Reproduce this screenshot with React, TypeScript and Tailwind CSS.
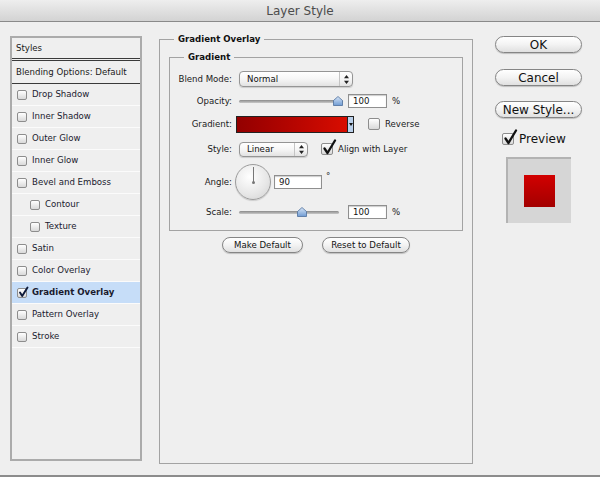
import React from 'react';

const styleItems: { label: string; indent?: boolean; checked?: boolean; selected?: boolean }[] = [
    { label: 'Drop Shadow' },
    { label: 'Inner Shadow' },
    { label: 'Outer Glow' },
    { label: 'Inner Glow' },
    { label: 'Bevel and Emboss' },
    { label: 'Contour', indent: true },
    { label: 'Texture', indent: true },
    { label: 'Satin' },
    { label: 'Color Overlay' },
    { label: 'Gradient Overlay', checked: true, selected: true },
    { label: 'Pattern Overlay' },
    { label: 'Stroke' },
];

function Checkbox({ checked, big }: { checked?: boolean; big?: boolean }) {
    return (
        <span
            className={`relative inline-block shrink-0 rounded-[2px] border border-[#8d8d8d] bg-gradient-to-b from-white to-[#d9d9d9] ${big ? 'w-[12px] h-[12px]' : 'w-[10px] h-[10px]'}`}
        >
            {checked && big && (
                <svg className="absolute left-[0px] top-[-5px]" width="15" height="16" viewBox="0 0 15 16">
                    <path d="M2.5 9.5 L5.5 14 L13 1.5" stroke="#111" strokeWidth="2.3" fill="none" strokeLinecap="round" strokeLinejoin="round" />
                </svg>
            )}
            {checked && !big && (
                <svg className="absolute left-[0px] top-[-3px]" width="11" height="12" viewBox="0 0 11 12">
                    <path d="M2 6.5 L4.2 10 L9.5 1.5" stroke="#0d1a3a" strokeWidth="1.9" fill="none" strokeLinecap="round" strokeLinejoin="round" />
                </svg>
            )}
        </span>
    );
}

function SelectBox({ value, className }: { value: string; className: string }) {
    return (
        <div className={`flex items-center rounded-[4px] border border-[#959595] bg-gradient-to-b from-white via-[#f6f6f6] to-[#e2e2e2] shadow-[0_1px_1px_rgba(0,0,0,0.15)] ${className}`}>
            <span className="flex-1 pl-[7px] text-[8.6px] text-[#111]">{value}</span>
            <span className="h-full w-[13px] border-l border-[#c4c4c4] flex items-center justify-center">
                <svg width="5" height="9" viewBox="0 0 5 9">
                    <path d="M2.5 0 L5 3.2 L0 3.2 Z M2.5 9 L5 5.8 L0 5.8 Z" fill="#222" />
                </svg>
            </span>
        </div>
    );
}

function Slider({ width, thumb }: { width: string; thumb: number }) {
    return (
        <div className={`relative h-[10px] flex items-center ${width}`}>
            <div className="w-full h-[3px] rounded-full bg-gradient-to-b from-[#8a8a8a] to-[#c9c9c9]" />
            <svg className="absolute top-[0px]" style={{ left: thumb }} width="10" height="10" viewBox="0 0 10 10">
                <defs>
                    <linearGradient id="thumbg" x1="0" y1="0" x2="0" y2="1">
                        <stop offset="0" stopColor="#d8e6f7" />
                        <stop offset="1" stopColor="#6f9bd3" />
                    </linearGradient>
                </defs>
                <path d="M5 0.5 L9.5 4.5 L9.5 9.5 L0.5 9.5 L0.5 4.5 Z" fill="url(#thumbg)" stroke="#4d6f9c" strokeWidth="0.8" />
            </svg>
        </div>
    );
}

function TextField({ value, className }: { value: string; className: string }) {
    return (
        <div className={`flex items-center bg-white border border-[#8f8f8f] shadow-[inset_0_1px_1px_rgba(0,0,0,0.2)] pl-[4px] text-[8.6px] text-[#111] ${className}`}>
            {value}
        </div>
    );
}

function AquaButton({ label, className, big }: { label: string; className: string; big?: boolean }) {
    return (
        <div
            className={`flex items-center justify-center rounded-full border border-[#858585] bg-gradient-to-b from-white via-[#f3f3f3] to-[#e0e0e0] shadow-[0_1px_1px_rgba(0,0,0,0.2)] text-[#111] ${big ? 'text-[12px]' : 'text-[8.6px]'} ${className}`}
        >
            {label}
        </div>
    );
}

function Label({ text }: { text: string }) {
    return <span className="w-[62px] shrink-0 text-right text-[8.6px] text-[#1a1a1a]">{text}</span>;
}

export default function App() {
    return (
        <div className="w-[600px] h-[477px] bg-[#efefef] flex flex-col overflow-hidden font-['DejaVu_Sans',sans-serif] border-b-2 border-[#8c8c8c]">
            <div className="h-[22px] shrink-0 bg-gradient-to-b from-[#eeeeee] to-[#d3d3d3] border-b border-[#8a8a8a] flex items-center justify-center text-[12px] text-[#4c4c4c]">
                Layer Style
            </div>

            <div className="flex flex-1">
                {/* styles list */}
                <div className="ml-[10px] mt-[14px] w-[132px] h-[425px] border-2 border-[#ababab] flex flex-col">
                    <div className="h-[23px] flex items-center pl-[4px] text-[8.6px] text-[#1a1a1a] border-b-[3px] border-double border-[#3a3a3a]">
                        Styles
                    </div>
                    <div className="h-[23px] flex items-center pl-[4px] text-[8.6px] text-[#1a1a1a] border-b border-[#3a3a3a]">
                        Blending Options: Default
                    </div>
                    {styleItems.map((item) => (
                        <div
                            key={item.label}
                            className={`h-[22px] flex items-center gap-[5px] border-b border-[#fbfbfb] ${item.indent ? 'pl-[18px]' : 'pl-[5px]'} ${item.selected ? 'bg-[#c6ddf8] font-bold' : ''}`}
                        >
                            <Checkbox checked={item.checked} />
                            <span className="text-[8.6px] text-[#1a1a2e]">{item.label}</span>
                        </div>
                    ))}
                </div>

                {/* settings */}
                <fieldset className="ml-[17px] mt-[11px] w-[314px] h-[431px] border border-[#a3a3a3]">
                    <legend className="ml-[14px] px-[4px] text-[8.6px] leading-[12px] font-bold text-[#111]">Gradient Overlay</legend>
                    <fieldset className="mx-[9px] mt-[6px] border border-[#a3a3a3] pt-[5px] pb-[8px]">
                        <legend className="ml-[14px] px-[4px] text-[8.6px] leading-[12px] font-bold text-[#111]">Gradient</legend>

                        <div className="h-[22px] flex items-center">
                            <Label text="Blend Mode:" />
                            <SelectBox value="Normal" className="ml-[7px] w-[114px] h-[16px]" />
                        </div>

                        <div className="h-[22px] flex items-center">
                            <Label text="Opacity:" />
                            <Slider width="ml-[7px] w-[104px]" thumb={94} />
                            <TextField value="100" className="ml-[5px] w-[39px] h-[14px]" />
                            <span className="ml-[5px] text-[8.6px] text-[#1a1a1a]">%</span>
                        </div>

                        <div className="h-[24px] flex items-center">
                            <Label text="Gradient:" />
                            <div className="ml-[4px] w-[118px] h-[17px] flex border border-[#222]">
                                <div className="flex-1 bg-gradient-to-r from-[#930000] to-[#d80d00]" />
                                <div className="w-[6px] bg-[#b9cfe9] border-l border-[#222] flex items-center justify-center">
                                    <svg width="4" height="3" viewBox="0 0 4 3">
                                        <path d="M0 0 L4 0 L2 3 Z" fill="#111" />
                                    </svg>
                                </div>
                            </div>
                            <span className="ml-[14px] flex">
                                <Checkbox big />
                            </span>
                            <span className="ml-[5px] text-[8.6px] text-[#1a1a1a]">Reverse</span>
                        </div>

                        <div className="h-[26px] flex items-center">
                            <Label text="Style:" />
                            <SelectBox value="Linear" className="ml-[7px] w-[69px] h-[15px]" />
                            <span className="ml-[13px] flex">
                                <Checkbox checked big />
                            </span>
                            <span className="ml-[5px] text-[8.6px] text-[#1a1a1a]">Align with Layer</span>
                        </div>

                        <div className="h-[40px] flex items-center">
                            <Label text="Angle:" />
                            <div className="relative ml-[3px] w-[36px] h-[36px] rounded-full border border-[#9c9c9c] bg-[radial-gradient(circle_at_40%_35%,#ffffff,#e6e6e6_60%,#cfcfcf)] shadow-[0_1px_1px_rgba(0,0,0,0.15)]">
                                <div className="absolute left-[17px] top-[2px] w-px h-[16px] bg-[#777]" />
                                <div className="absolute left-[16px] top-[16px] w-[3px] h-[3px] rounded-full bg-[#777]" />
                            </div>
                            <TextField value="90" className="ml-[3px] w-[48px] h-[14px]" />
                            <span className="ml-[4px] self-start mt-[8px] text-[8.6px] text-[#1a1a1a]">°</span>
                        </div>

                        <div className="h-[20px] flex items-center">
                            <Label text="Scale:" />
                            <Slider width="ml-[7px] w-[100px]" thumb={58} />
                            <TextField value="100" className="ml-[9px] w-[39px] h-[14px]" />
                            <span className="ml-[5px] text-[8.6px] text-[#1a1a1a]">%</span>
                        </div>
                    </fieldset>

                    <div className="mt-[6px] flex justify-center gap-[19px]">
                        <AquaButton label="Make Default" className="w-[81px] h-[16px]" />
                        <AquaButton label="Reset to Default" className="w-[88px] h-[16px]" />
                    </div>
                </fieldset>

                {/* buttons */}
                <div className="ml-[22px] mt-[14px] w-[87px] flex flex-col">
                    <AquaButton label="OK" big className="h-[17px]" />
                    <AquaButton label="Cancel" big className="mt-[16px] h-[17px]" />
                    <AquaButton label="New Style..." big className="mt-[15px] h-[17px]" />
                    <div className="mt-[12px] ml-[7px] flex items-center gap-[5px]">
                        <Checkbox checked big />
                        <span className="text-[12px] text-[#111]">Preview</span>
                    </div>
                    <div className="mt-[9px] ml-[11px] w-[65px] h-[66px] bg-[#d6d6d6] border-t-2 border-l-2 border-[#b3b3b3] flex items-center justify-center">
                        <div className="w-[31px] h-[32px] bg-gradient-to-b from-[#d20000] to-[#a30000]" />
                    </div>
                </div>
            </div>
        </div>
    );
}
